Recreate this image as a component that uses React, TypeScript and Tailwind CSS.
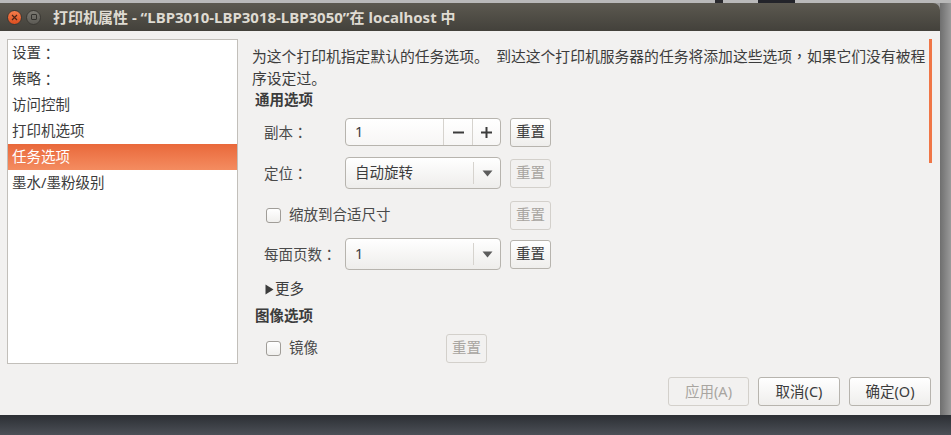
import React from "react";

const FONT = "font-['Noto_Sans','Noto_Sans_CJK_SC',sans-serif]";

// full-width punctuation drawn centred in its cell, as in the screenshot
const P = ({ c }: { c: string }) => (
    <span className="font-['Noto_Sans_CJK_TC',sans-serif]">{c}</span>
);

const ResetButton = ({ disabled = false }: { disabled?: boolean }) => (
    <button
        className={`h-[29px] w-[41px] rounded-[3px] border text-[14.5px] ${
            disabled
                ? "border-[#d3d0cb] bg-[#f2f1f0] text-[#a8a5a0]"
                : "border-[#b7b4ae] bg-gradient-to-b from-[#ffffff] to-[#efeeec] text-[#3c3c3c]"
        }`}
    >
        重置
    </button>
);

const Arrow = () => (
    <svg width="11" height="7" viewBox="0 0 11 7">
        <path d="M0.5 0.5 L10.5 0.5 L5.5 6.5 Z" fill="#5c5c5c" />
    </svg>
);

const Combo = ({ value }: { value: string }) => (
    <div className="flex h-[32px] w-[156px] items-center rounded-[4px] border border-[#b7b4ae] bg-gradient-to-b from-[#ffffff] to-[#eeedeb]">
        <span className="flex-1 pl-[9px] text-[14.5px] text-[#3c3c3c]">{value}</span>
        <div className="h-[22px] w-px bg-[#d6d3ce]" />
        <div className="flex w-[26px] items-center justify-center">
            <Arrow />
        </div>
    </div>
);

const Checkbox = () => (
    <div className="h-[15px] w-[15px] rounded-[3px] border border-[#a09d98] bg-gradient-to-b from-[#ffffff] to-[#f0efed]" />
);

const Label = ({ text }: { text: string }) => (
    <span className="w-[81px] text-[14.5px] text-[#4a4a4a]">
        {text}
        <P c="：" />
    </span>
);

const listItems = [
    { key: "设置", text: "设置", colon: true },
    { key: "策略", text: "策略", colon: true },
    { key: "访问控制", text: "访问控制", colon: false },
    { key: "打印机选项", text: "打印机选项", colon: false },
    { key: "任务选项", text: "任务选项", colon: false },
    { key: "墨水", text: "墨水/墨粉级别", colon: false },
];

export default function App() {
    return (
        <div className={`flex h-[435px] w-[951px] flex-col overflow-hidden bg-[#9c9c9c] ${FONT}`}>
            {/* desktop behind the window */}
            <div className="flex h-[3px] bg-[#b9b9b9]">
                <div className="w-[715px]" />
                <div className="w-[8px] bg-[#2a2a2e]" />
                <div className="w-[35px]" />
                <div className="w-[37px] bg-[#23242a]" />
            </div>

            <div className="flex">
                <div className="flex w-[940px] flex-col">
                    {/* title bar */}
                    <div className="flex h-[28px] items-center rounded-tr-[7px] bg-gradient-to-b from-[#5c5950] to-[#43413b]">
                        <div className="ml-[7px] flex h-[15px] w-[15px] items-center justify-center rounded-full border border-[#3b3934] bg-gradient-to-b from-[#f47c4a] to-[#dc4e1f]">
                            <svg width="7" height="7" viewBox="0 0 7 7">
                                <path d="M1 1 L6 6 M6 1 L1 6" stroke="#4a2416" strokeWidth="1.2" />
                            </svg>
                        </div>
                        <div className="ml-[4px] flex h-[15px] w-[15px] items-center justify-center rounded-full border border-[#3b3934] bg-gradient-to-b from-[#7b7972] to-[#5c5a54]">
                            <div className="h-[6px] w-[6px] rounded-[1px] border border-[#33322e]" />
                        </div>
                        <span className="ml-[12px] text-[15px] font-bold text-[#dfdbd2]">
                            打印机属性 - “LBP3010-LBP3018-LBP3050”在 localhost 中
                        </span>
                    </div>

                    {/* body */}
                    <div className="flex h-[384px] flex-col bg-[#f2f1f0]">
                        <div className="flex flex-1 pl-[7px] pt-[8px]">
                            <div className="flex h-[325px] w-[231px] flex-col border border-[#c2bfba] bg-white">
                                {listItems.map((item) => (
                                    <div
                                        key={item.key}
                                        className={`flex h-[26px] items-center pl-[4px] text-[14.5px] ${
                                            item.key === "任务选项"
                                                ? "bg-gradient-to-b from-[#e9683a] to-[#f48c60] text-white"
                                                : "text-[#3c3c3c]"
                                        }`}
                                    >
                                        {item.text}
                                        {item.colon && <P c="：" />}
                                    </div>
                                ))}
                            </div>

                            <div className="ml-[14px] mt-[6px] flex flex-1 flex-col text-[#3c3c3c]">
                                <div className="text-[14.8px] leading-[22px]">
                                    <div className="whitespace-nowrap">
                                        为这个打印机指定默认的任务选项。　到达这个打印机服务器的任务将添加这些选项
                                        <P c="，" />
                                        如果它们没有被程
                                    </div>
                                    <div>序设定过。</div>
                                </div>

                                <div className="flex h-[22px] items-center pl-[3px] text-[14.5px] font-bold">通用选项</div>

                                <div className="mt-[5px] flex h-[32px] items-center pl-[12px]">
                                    <Label text="副本" />
                                    <div className="flex h-[28px] w-[156px] items-center rounded-[4px] border border-[#b7b4ae] bg-gradient-to-b from-[#ffffff] to-[#f7f6f5]">
                                        <span className="flex-1 pl-[9px] text-[14.5px]">1</span>
                                        <div className="flex h-full w-[29px] items-center justify-center border-l border-[#d6d3ce]">
                                            <svg width="11" height="11" viewBox="0 0 11 11">
                                                <path d="M0 5.5 H11" stroke="#3c3c3c" strokeWidth="2" />
                                            </svg>
                                        </div>
                                        <div className="flex h-full w-[28px] items-center justify-center border-l border-[#d6d3ce]">
                                            <svg width="11" height="11" viewBox="0 0 11 11">
                                                <path d="M0 5.5 H11 M5.5 0 V11" stroke="#3c3c3c" strokeWidth="2" />
                                            </svg>
                                        </div>
                                    </div>
                                    <div className="ml-[9px]">
                                        <ResetButton />
                                    </div>
                                </div>

                                <div className="mt-[9px] flex h-[32px] items-center pl-[12px]">
                                    <Label text="定位" />
                                    <Combo value="自动旋转" />
                                    <div className="ml-[9px]">
                                        <ResetButton disabled />
                                    </div>
                                </div>

                                <div className="mt-[10px] flex h-[32px] items-center pl-[14px]">
                                    <div className="flex w-[244px] items-center">
                                        <Checkbox />
                                        <span className="ml-[8px] text-[14.5px] text-[#4a4a4a]">缩放到合适尺寸</span>
                                    </div>
                                    <ResetButton disabled />
                                </div>

                                <div className="mt-[7px] flex h-[32px] items-center pl-[12px]">
                                    <Label text="每面页数" />
                                    <Combo value="1" />
                                    <div className="ml-[9px]">
                                        <ResetButton />
                                    </div>
                                </div>

                                <div className="mt-[8px] flex h-[22px] items-center pl-[13px] text-[14.5px]">
                                    <svg width="9" height="11" viewBox="0 0 9 11">
                                        <path d="M0.5 0.5 L8.5 5.5 L0.5 10.5 Z" fill="#3c3c3c" />
                                    </svg>
                                    <span className="ml-[1px]">更多</span>
                                </div>

                                <div className="mt-[5px] flex h-[22px] items-center pl-[3px] text-[14.5px] font-bold">图像选项</div>

                                <div className="mt-[5px] flex h-[32px] items-center pl-[14px]">
                                    <div className="flex w-[180px] items-center">
                                        <Checkbox />
                                        <span className="ml-[8px] text-[14.5px] text-[#4a4a4a]">镜像</span>
                                    </div>
                                    <ResetButton disabled />
                                </div>
                            </div>

                            <div className="mr-[8px] h-[124px] w-[3px] bg-[#f07646]" />
                        </div>

                        {/* dialog buttons */}
                        <div className="flex justify-end gap-[9px] pb-[9px] pr-[9px] text-[14.5px]">
                            <button className="h-[29px] w-[81px] rounded-[3px] border border-[#d3d0cb] bg-[#f2f1f0] text-[#a8a5a0]">
                                应用(A)
                            </button>
                            <button className="h-[29px] w-[82px] rounded-[3px] border border-[#b7b4ae] bg-gradient-to-b from-[#ffffff] to-[#efeeec] text-[#3c3c3c]">
                                取消(C)
                            </button>
                            <button className="h-[29px] w-[82px] rounded-[3px] border border-[#b7b4ae] bg-gradient-to-b from-[#ffffff] to-[#efeeec] text-[#3c3c3c]">
                                确定(O)
                            </button>
                        </div>
                    </div>
                </div>

                {/* shadow on the right */}
                <div className="flex-1 bg-gradient-to-r from-[#6f6f6f] to-[#9a9a9a]" />
            </div>

            {/* dark panel below */}
            <div className="flex-1 bg-gradient-to-b from-[#2c2f34] to-[#4c5057]" />
        </div>
    );
}
